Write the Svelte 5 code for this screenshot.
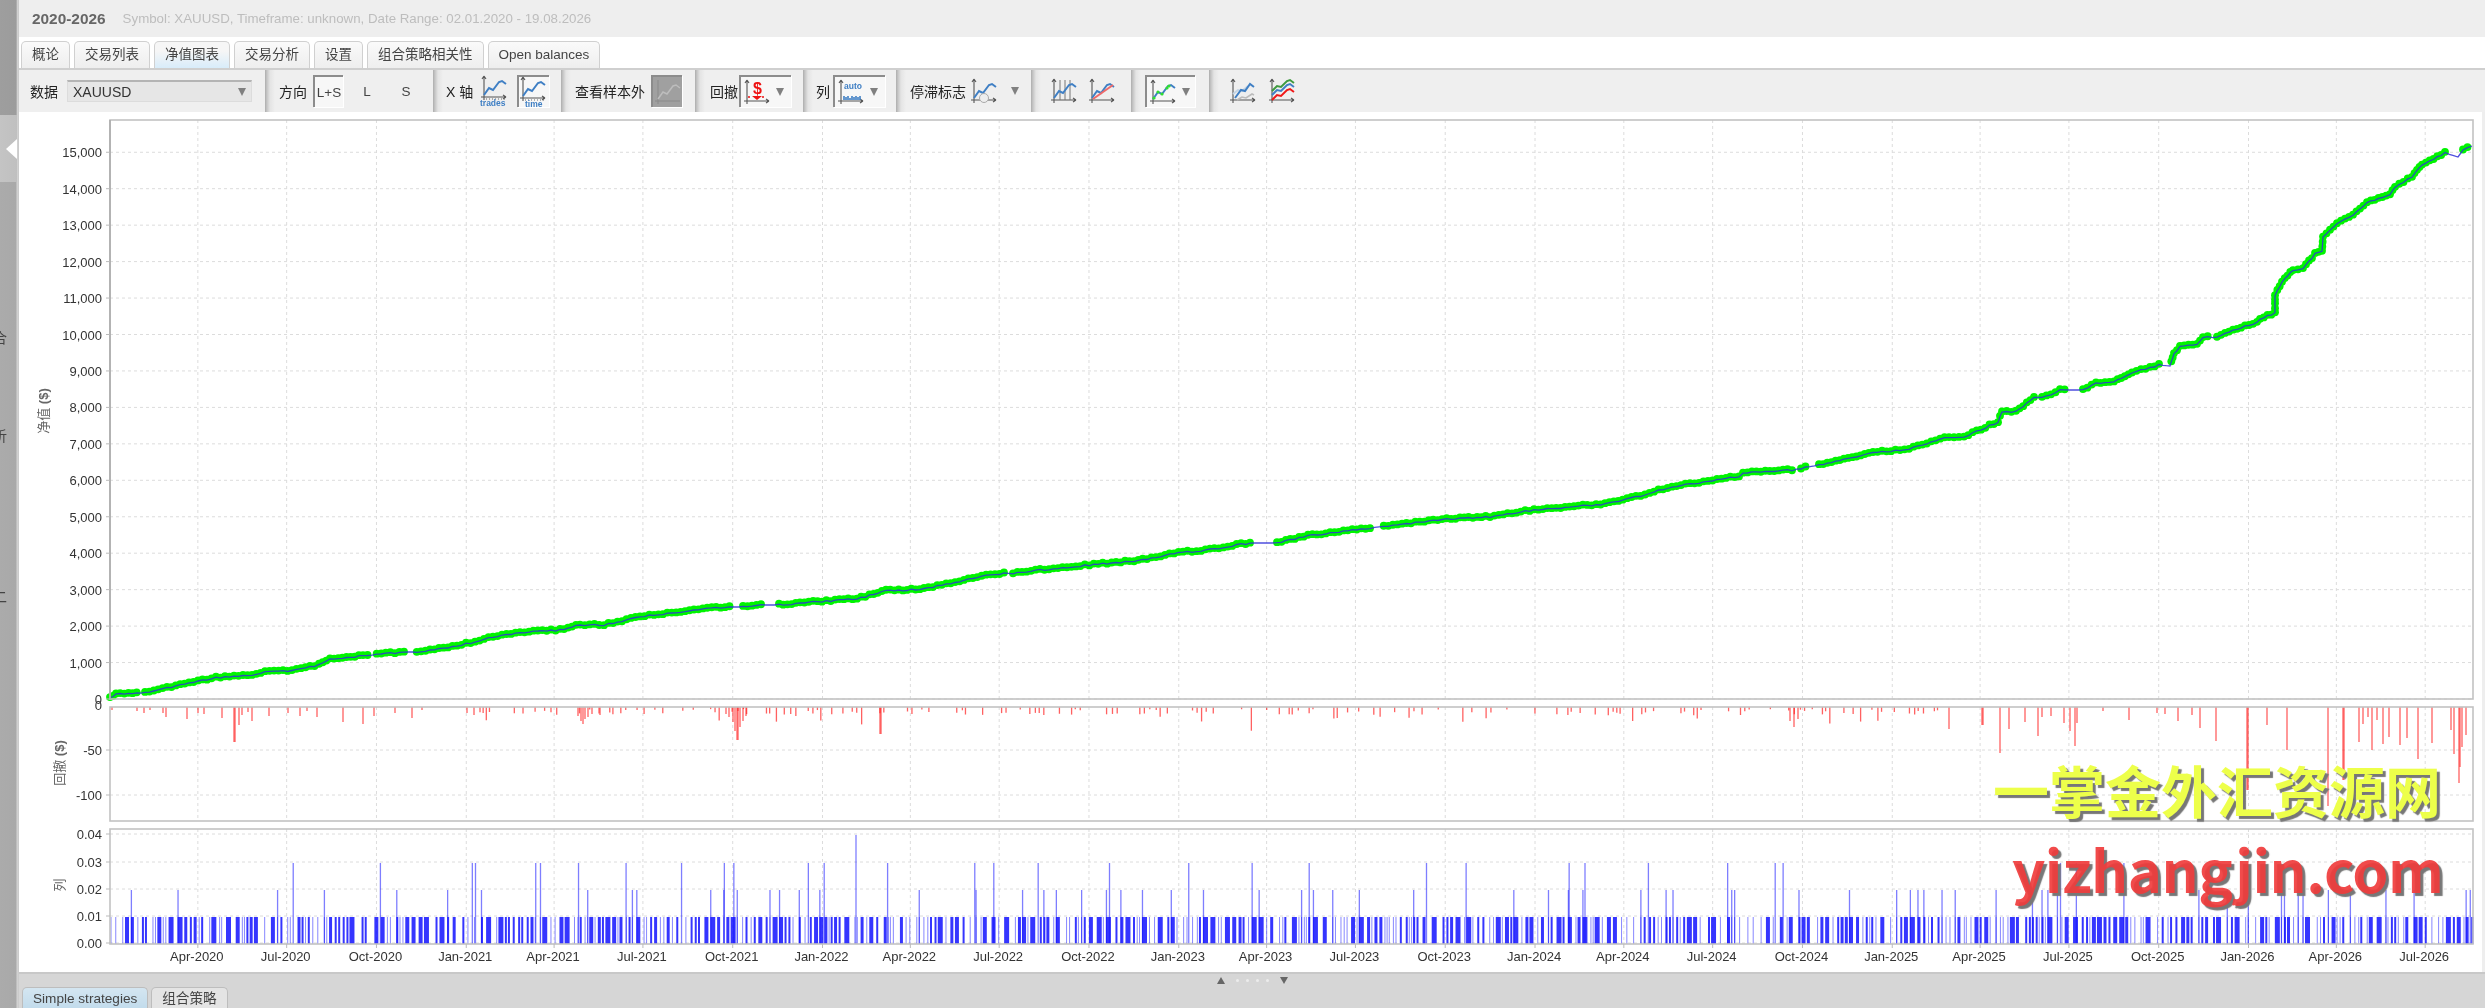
<script>
  const tabs = ['概论', '交易列表', '净值图表', '交易分析', '设置', '组合策略相关性', 'Open balances'];

  function rng(seed) {
    let s = seed;
    return () => {
      s = (s * 1664525 + 1013904223) % 4294967296;
      return s / 4294967296;
    };
  }

  const L = 110, R = 2473, T = 120;
  const startDay = Date.UTC(2020, 0, 2);
  const perDay = (R - L) / 2421;
  const dx = (y, m) => L + ((Date.UTC(y, m, 1) - startDay) / 86400000) * perDay;
  const mon = ['Jan', 'Apr', 'Jul', 'Oct'];
  const quarters = [];
  for (let y = 2020; y <= 2026; y++) {
    for (let q = 0; q < 4; q++) {
      if ((y === 2020 && q === 0) || (y === 2026 && q > 2)) continue;
      quarters.push({ x: dx(y, q * 3), label: `${mon[q]}-${y}` });
    }
  }

  const eqTicks = Array.from({ length: 16 }, (_, i) => ({
    y: 699 - i * 36.45,
    label: i === 0 ? '0' : `${i},000`
  }));
  const ddTicks = [{ y: 750, label: '-50' }, { y: 795, label: '-100' }];
  const lotTicks = [
    { y: 834, label: '0.04' }, { y: 862, label: '0.03' }, { y: 889, label: '0.02' },
    { y: 916, label: '0.01' }, { y: 943, label: '0.00' }
  ];

  const curve = [
    [110,698],[116,694],[145,693],[167,688],[189,683],[216,678],[252,675],[265,672],[292,671],[319,665],
    [330,659],[363,656],[404,652],[421,652],[466,644],[493,637],[529,632],[560,630],[580,625],[604,625],
    [640,617],[654,615],[725,607],[743,607],[761,605],[779,605],[800,603],[857,599],[886,591],[924,589],
    [995,574],[1013,573],[1058,568],[1134,561],[1147,559],[1183,552],[1201,551],[1250,543],[1277,543],[1308,536],
    [1370,528],[1402,524],[1460,518],[1490,517],[1534,510],[1605,504],[1636,497],[1672,487],[1726,478],[1739,477],
    [1743,473],[1792,470],[1819,465],[1873,453],[1909,449],[1949,437],[1964,437],[1998,422],[2002,412],[2016,412],
    [2034,397],[2042,398],[2060,390],[2083,390],[2096,383],[2114,382],[2132,373],[2159,365],[2170,366],[2174,353],
    [2180,347],[2197,345],[2203,337],[2217,338],[2233,330],[2257,323],[2260,319],[2275,313],[2275,295],[2282,282],
    [2293,270],[2303,269],[2315,254],[2322,252],[2323,237],[2337,223],[2353,215],[2367,203],[2390,195],[2395,187],
    [2412,177],[2422,165],[2445,153],[2458,157],[2463,150],[2472,146]
  ];
  const gaps = [[138,145],[368,375],[408,414],[732,741],[765,776],[1004,1013],[1254,1277],[1372,1382],[1792,1800],[1806,1819],[2034,2040],[2065,2083],[2161,2171],[2208,2215],[2445,2463]];

  const dotRand = rng(17);
  const dots = [];
  const wiggle = [];
  for (let i = 1; i < curve.length; i++) {
    const [x0, y0] = curve[i - 1];
    const [x1, y1] = curve[i];
    const n = Math.max(1, Math.round(Math.hypot(x1 - x0, y1 - y0) / 4.4));
    for (let k = 0; k < n; k++) {
      const x = x0 + ((x1 - x0) * k) / n;
      const y = y0 + ((y1 - y0) * k) / n;
      const inGap = gaps.some(([a, b]) => x > a && x < b);
      const jy = inGap ? y : y + (dotRand() - 0.5) * 1.6;
      wiggle.push(`${x.toFixed(1)},${jy.toFixed(1)}`);
      if (!inGap) dots.push({ x, y: jy - 0.5 });
    }
  }
  wiggle.push('2472,146');
  const linePts = wiggle.join(' ');

  const ddKnown = [
    [112,3],[137,4],[144,6],[150,3],[163,6],[166,10],[187,12],[198,6],[204,7],[222,11],[234,35],[235,35],[239,18],[242,8],[248,5],[252,14],
    [269,9],[288,6],[300,9],[307,4],[317,10],[343,15],[363,17],[374,9],[395,6],[412,11],[422,3],[467,6],[474,8],
    [578,9],[581,14],[583,17],[585,12],[588,10],[592,7],[600,8],[726,7],[729,10],[733,15],[735,24],[737,33],[738,33],[740,20],[743,14],[746,9],[880,27],[881,27],[1790,14],[1794,20],[1798,12],
    [1949,22],[1982,18],[1983,18],[2000,46],[2009,22],[2025,15],[2038,29],[2042,10],[2051,9],[2064,16],[2070,24],[2075,39],[2077,16],
    [2103,4],[2129,13],[2157,6],[2165,7],[2178,14],[2192,8],[2200,21],[2216,34],[2247,83],[2248,83],[2267,18],[2287,43],[2328,99],
    [2343,73],[2344,73],[2359,35],[2363,17],[2368,10],[2372,43],[2377,13],[2383,37],[2389,30],[2400,38],[2407,31],[2418,52],[2432,36],
    [2451,23],[2454,47],[2459,76],[2460,60],[2462,40],[2466,28]
  ];
  const ddRand = rng(91);
  const ddBars = ddKnown.map(([x, d]) => ({ x, d }));
  for (let x = 480; x < 1949; x += 3 + ddRand() * ddRand() * 30) {
    const r = ddRand();
    const d = r < 0.72 ? 2 + ddRand() * 6 : r < 0.95 ? 6 + ddRand() * 9 : 12 + ddRand() * 12;
    ddBars.push({ x, d });
  }

  const lotRand = rng(2024);
  const lotBars = [];
  const lotRuns = [];
  const widths = [1, 1, 1, 1, 2, 2, 3, 4, 5];
  let x = 110.5;
  while (x < 2472) {
    const w = widths[Math.floor(lotRand() * widths.length)];
    lotRuns.push({ x: x + w / 2, w: Math.min(w, 2472 - x), dark: w > 1 });
    if (lotRand() < 0.16) lotBars.push({ x: x + 0.5, h: 54 });
    x += w + 1 + lotRand() * lotRand() * 7;
  }
  [185,240,298,300,338,341,365,395,430,457,463,510,520,560,615,627,655,700,750,790,826,900,925,990,1000,1040,1090,1120,1125,1300,1310,1340]
    .forEach((v) => lotBars.push({ x: v * 1.585, h: 81 }));
  lotBars.push({ x: 856, h: 109 });
</script>

{#snippet axes()}
  <path d="M4 1v24M1 22h25M4 1l-2 3M4 1l2 3M26 22l-3-2M26 22l-3 2" fill="none" stroke="#555" stroke-width="1.1" />
{/snippet}
{#snippet blueLine()}
  <path d="M4 20l5-7 4 2 6-8 3-1 4 3" fill="none" stroke="#3f7fc4" stroke-width="2" />
{/snippet}

<div class="app">
  <aside class="side">
    <div class="side-top"></div>
    <div class="side-pointer"><span class="tri"></span></div>
    <span class="clip c1">合</span>
    <span class="clip c2">析</span>
    <span class="clip c3">二</span>
  </aside>

  <div class="main">
    <header class="title">
      <strong>2020-2026</strong>
      <span>Symbol: XAUUSD, Timeframe: unknown, Date Range: 02.01.2020 - 19.08.2026</span>
    </header>

    <nav class="tabs">
      {#each tabs as t, i}
        <div class="tab" class:active={i === 2}>{t}</div>
      {/each}
    </nav>

    <div class="toolbar">
      <div class="grp g1">
        <span class="lab">数据</span>
        <div class="combo"><span>XAUUSD</span><i class="arrow"></i></div>
      </div>
      <div class="grp g2">
        <span class="lab">方向</span>
        <div class="btn on ls">L+S</div>
        <div class="btn ls">L</div>
        <div class="btn ls">S</div>
      </div>
      <div class="grp g3">
        <span class="lab">X 轴</span>
        <div class="btn ic">
          <svg width="30" height="32" viewBox="0 0 30 32">
            {@render axes()}
            {@render blueLine()}
            <path d="M6 24h20" stroke="#666" stroke-dasharray="1 2" />
            <text x="0" y="31" class="mini">trades</text>
          </svg>
        </div>
        <div class="btn on ic">
          <svg width="30" height="32" viewBox="0 0 30 32">
            {@render axes()}
            {@render blueLine()}
            <path d="M6 24h20" stroke="#666" stroke-dasharray="1 2" />
            <text x="6" y="31" class="mini">time</text>
          </svg>
        </div>
      </div>
      <div class="grp g4">
        <span class="lab">查看样本外</span>
        <div class="btn on oos">
          <svg width="27" height="27" viewBox="0 0 27 27">
            <path d="M4 1v24M1 22h25" fill="none" stroke="#8a8a8a" />
            <path d="M4 20l5-7 4 2 6-8 3-1 4 3" fill="none" stroke="#bdbdbd" stroke-width="1.5" />
          </svg>
        </div>
      </div>
      <div class="grp g5">
        <span class="lab">回撤</span>
        <div class="btn on drop w52">
          <svg width="27" height="27" viewBox="0 0 27 27">
            {@render axes()}
            <text x="10" y="15" class="dollar">$</text>
            <path d="M5 18h20" stroke="#e11" stroke-dasharray="2 5" stroke-width="1.5" />
            <path d="M9 17h10l-5 4z" fill="#e11" />
          </svg>
          <i class="arrow"></i>
        </div>
      </div>
      <div class="grp g6">
        <span class="lab">列</span>
        <div class="btn on drop w52">
          <svg width="27" height="27" viewBox="0 0 27 27">
            {@render axes()}
            <text x="7" y="10" class="auto">auto</text>
            <path d="M7 21v-4M9 21v-3M11 21v-4M13 21v-2M15 21v-4M17 21v-3M19 21v-4M21 21v-3M23 21v-4" stroke="#3f7fc4" stroke-width="1.6" />
          </svg>
          <i class="arrow"></i>
        </div>
      </div>
      <div class="grp g7">
        <span class="lab">停滞标志</span>
        <div class="drop plain">
          <svg width="27" height="27" viewBox="0 0 27 27">
            {@render axes()}
            {@render blueLine()}
            <circle cx="14" cy="20" r="4.5" fill="#eee" stroke="#aaa" />
          </svg>
          <i class="arrow"></i>
        </div>
      </div>
      <div class="grp g8">
        <svg width="27" height="27" viewBox="0 0 27 27">
          {@render axes()}
          <path d="M10 2v20M15 2v20M20 2v20" stroke="#777" />
          {@render blueLine()}
        </svg>
        <svg width="27" height="27" viewBox="0 0 27 27">
          {@render axes()}
          {@render blueLine()}
          <path d="M5 21L25 7" stroke="#ee6a6a" stroke-width="2" />
        </svg>
      </div>
      <div class="grp g9">
        <div class="btn on drop w50">
          <svg width="27" height="27" viewBox="0 0 27 27">
            {@render axes()}
            {@render blueLine()}
            <g fill="#2fe02f"><circle cx="5" cy="19" r="1.6" /><circle cx="9" cy="13" r="1.6" /><circle cx="13" cy="15" r="1.6" /><circle cx="18" cy="9" r="1.6" /><circle cx="20" cy="7" r="1.6" /></g>
          </svg>
          <i class="arrow"></i>
        </div>
      </div>
      <div class="grp g10">
        <svg width="27" height="27" viewBox="0 0 27 27">
          {@render axes()}
          <path d="M4 16l5-4 4 1 6-5" fill="none" stroke="#c3d4e4" stroke-width="2" />
          <path d="M6 20l6-8 4 1 5-7 4 3" fill="none" stroke="#3f7fc4" stroke-width="2" />
          <path d="M8 22l5-3 4 1 6-4 2 1" fill="none" stroke="#bbb" stroke-width="1.6" />
        </svg>
        <svg width="27" height="27" viewBox="0 0 27 27">
          {@render axes()}
          <path d="M4 13l5-5 4 1 6-6 3-1 4 3" fill="none" stroke="#3f9a3f" stroke-width="2" />
          <path d="M4 17l5-5 4 1 6-6 3-1 4 3" fill="none" stroke="#3f7fc4" stroke-width="2" />
          <path d="M4 22l5-5 4 1 6-6 3-1 4 3" fill="none" stroke="#f01818" stroke-width="2" />
        </svg>
      </div>
    </div>

    <section class="chart">
      <svg class="plot" width="2466" height="860" viewBox="19 112 2466 860">
        <!-- grid -->
        <g stroke="#dcdcdc" stroke-dasharray="3 3" fill="none">
          {#each eqTicks as t}<line x1={L} x2={R} y1={t.y} y2={t.y} />{/each}
          {#each ddTicks as t}<line x1={L} x2={R} y1={t.y} y2={t.y} />{/each}
          {#each lotTicks as t}<line x1={L} x2={R} y1={t.y} y2={t.y} />{/each}
          {#each quarters as q}
            <line x1={q.x} x2={q.x} y1={T} y2={699} />
            <line x1={q.x} x2={q.x} y1={707} y2={821} />
            <line x1={q.x} x2={q.x} y1={829} y2={944} />
          {/each}
        </g>

        <!-- equity -->
        <g fill="#00f400">
          {#each dots as d}<circle cx={d.x} cy={d.y} r="3.9" />{/each}
        </g>
        <polyline points={linePts} fill="none" stroke="#3030d8" stroke-opacity="0.85" stroke-width="1.3" />

        <!-- drawdown -->
        <g stroke="#ff1e1e" stroke-opacity="0.7" stroke-width="1.3">
          {#each ddBars as b}<line x1={b.x} x2={b.x} y1={707} y2={707 + b.d} />{/each}
        </g>

        <!-- lots -->
        <g stroke="#1414ff" stroke-opacity="0.55" stroke-width="1.3">
          {#each lotBars as b}<line x1={b.x} x2={b.x} y1={944} y2={944 - b.h} />{/each}
        </g>
        {#each lotRuns as b}
          <line x1={b.x} x2={b.x} y1={944} y2={917} stroke="#1212ff" stroke-width={b.w} stroke-opacity={b.dark ? 0.85 : 0.5} />
        {/each}

        <!-- frames -->
        <g fill="none" stroke="#c2c2c2" stroke-width="1.6">
          <rect x={L} y={T} width={R - L} height={699 - T} />
          <rect x={L} y={707} width={R - L} height={114} />
          <rect x={L} y={829} width={R - L} height={115} />
        </g>
        <line x1={L} x2={L} y1={T} y2={699} stroke="#a8a8a8" stroke-width="1.4" />

        <!-- ticks and labels -->
        <g stroke="#bbb">
          {#each [...eqTicks, ...ddTicks, ...lotTicks] as t}<line x1={L - 4} x2={L} y1={t.y} y2={t.y} />{/each}
          {#each quarters as q}<line x1={q.x} x2={q.x} y1={944} y2={948} />{/each}
        </g>
        <g class="ylab">
          {#each eqTicks as t}<text x="102" y={t.y + 5}>{t.label}</text>{/each}
          <text x="102" y="710">0</text>
          {#each ddTicks as t}<text x="102" y={t.y + 5}>{t.label}</text>{/each}
          {#each lotTicks as t}<text x="102" y={t.y + 5}>{t.label}</text>{/each}
        </g>
        <g class="xlab">
          {#each quarters as q}<text x={q.x - 1} y="961">{q.label}</text>{/each}
        </g>
        <g class="axt">
          <text transform="translate(48 411) rotate(-90)">净值 <tspan font-weight="700">($)</tspan></text>
          <text transform="translate(64 763) rotate(-90)">回撤 <tspan font-weight="700">($)</tspan></text>
          <text transform="translate(64 885) rotate(-90)">列</text>
        </g>
      </svg>

      <div class="mark yellow">一掌金外汇资源网</div>
      <div class="mark red">yizhangjin.com</div>
    </section>

    <footer class="foot">
      <div class="splitter">
        <i class="up"></i><b></b><b></b><b></b><b></b><i class="down"></i>
      </div>
      <div class="btabs">
        <div class="btab active">Simple strategies</div>
        <div class="btab">组合策略</div>
      </div>
    </footer>
  </div>
</div>

<style>
  :global(body) {
    margin: 0;
    overflow: hidden;
    background: #ddd;
  }
  .app {
    width: 2485px;
    height: 1008px;
    display: flex;
    overflow: hidden;
    background: #fff;
    color: #333;
    font-family: "Liberation Sans", "Noto Sans CJK SC", sans-serif;
    filter: blur(0.5px);
  }
  .side {
    width: 19px;
    flex: none;
    position: relative;
    overflow: hidden;
    background: linear-gradient(90deg, #ababab 0, #a9a9a9 16px, #d4d4d4 17px, #c8c8c8 19px);
  }
  .side-top { height: 115px; background: linear-gradient(90deg, #9e9e9e 0, #9c9c9c 16px, transparent 17px); }
  .side-pointer {
    height: 67px;
    display: flex;
    align-items: center;
    justify-content: flex-end;
    padding-right: 2px;
    background: linear-gradient(90deg, #c4c4c4 0, #c0c0c0 16px, transparent 17px);
  }
  .tri {
    width: 0;
    height: 0;
    border-style: solid;
    border-width: 10px 11px 10px 0;
    border-color: transparent #fff transparent transparent;
  }
  .clip { position: absolute; left: -7px; font-size: 14px; color: #444; }
  .c1 { top: 327px; }
  .c2 { top: 425px; }
  .c3 { top: 586px; }

  .main {
    flex: 1;
    min-width: 0;
    display: flex;
    flex-direction: column;
  }
  .title {
    height: 37px;
    flex: none;
    background: #eee;
    display: flex;
    align-items: center;
    gap: 17px;
    padding-left: 13px;
  }
  .title strong { font-size: 15.4px; color: #666; }
  .title span { font-size: 13.3px; color: #bdbdbd; }

  .tabs {
    height: 31px;
    flex: none;
    box-sizing: border-box;
    padding: 4px 0 0 2px;
    display: flex;
    gap: 4px;
    background: #fff;
  }
  .tab {
    padding: 0 10px;
    font-size: 13.5px;
    line-height: 26px;
    color: #444;
    border: 1px solid #d0d0d0;
    border-bottom: 0;
    border-radius: 5px 5px 0 0;
    background: linear-gradient(#fafafa, #eeeeee);
    box-sizing: border-box;
  }
  .tab.active { background: linear-gradient(#f6f6f6 35%, #d8ecfa); }

  .toolbar {
    height: 44px;
    flex: none;
    display: grid;
    grid-template-columns: 246px 168px 128px 134px 108px 93px 135px 100px 78px 1fr;
    background: #efefef;
    border-top: 2px solid #cfcfcf;
    box-sizing: border-box;
    font-size: 14px;
  }
  .grp {
    display: flex;
    align-items: center;
    box-sizing: border-box;
    background: linear-gradient(90deg, #adadad 0, #c6c6c6 2px, #e4e4e4 5px, #efefef 10px);
  }
  .g1 { background: none; padding-left: 11px; gap: 9px; }
  .g2 { padding-left: 14px; gap: 6px; }
  .g3 { padding-left: 13px; gap: 6px; }
  .g4 { padding-left: 14px; gap: 6px; }
  .g5 { padding-left: 15px; gap: 1px; }
  .g6 { padding-left: 13px; gap: 3px; }
  .g7 { padding-left: 14px; gap: 4px; }
  .g8 { padding-left: 19px; gap: 11px; }
  .g9 { padding-left: 14px; }
  .g10 { padding-left: 20px; gap: 12px; }
  .lab { color: #222; white-space: nowrap; }
  .combo {
    width: 185px;
    height: 22px;
    display: flex;
    align-items: center;
    justify-content: space-between;
    padding: 0 5px;
    box-sizing: border-box;
    background: #e6e6e6;
    border: 1px solid #dcdcdc;
    border-top: 2px solid #b4b4b4;
    color: #333;
    font-size: 14px;
  }
  .arrow {
    width: 0;
    height: 0;
    border-style: solid;
    border-width: 8px 4.5px 0;
    border-color: #808080 transparent transparent;
  }
  .btn {
    display: flex;
    align-items: center;
    justify-content: center;
    box-sizing: border-box;
    height: 32px;
  }
  .btn.on {
    background: #f7f7f7;
    border-top: 2px solid #8c8c8c;
    border-left: 2px solid #8c8c8c;
    box-shadow: 1px 1px 0 #fff;
  }
  .ls { width: 30px; font-size: 13.5px; color: #444; margin-right: 3px; }
  .ic { width: 32px; }
  .oos.on { width: 31px; background: #a0a0a0; }
  .drop { display: flex; align-items: center; gap: 6px; padding-left: 2px; justify-content: flex-start; }
  .w52 { width: 52px; }
  .w50 { width: 50px; }
  .plain { gap: 14px; padding-left: 0; }
  .mini { font: 700 8.5px "Liberation Sans", sans-serif; fill: #3f7fc4; }
  .dollar { font: 700 16px "Liberation Sans", sans-serif; fill: #e11; }
  .auto { font: 700 8.5px "Liberation Sans", sans-serif; fill: #3f7fc4; }

  .chart {
    position: relative;
    height: 860px;
    flex: none;
    background: linear-gradient(90deg, #fff 2463px, #eee 2463px);
  }
  .plot { display: block; }
  .ylab text { font-size: 13px; text-anchor: end; fill: #333; }
  .xlab text { font-size: 13px; text-anchor: middle; fill: #333; }
  .axt text { font-size: 13px; text-anchor: middle; fill: #666; }
  .mark {
    position: absolute;
    white-space: nowrap;
    font-family: "Noto Sans CJK SC", "Noto Sans", sans-serif;
    font-weight: 700;
    line-height: 1;
    text-shadow: 3px 3px 1px #777;
  }
  .yellow { left: 1974px; top: 649px; font-size: 56px; color: #edff4a; }
  .red { left: 1993px; top: 727px; font-size: 58px; color: rgba(240, 60, 60, 0.92); letter-spacing: -0.5px; }

  .foot {
    flex: 1;
    position: relative;
    display: flex;
    flex-direction: column;
    background: #d6d6d6;
    border-top: 2px solid #c8c8c8;
    box-sizing: border-box;
  }
  .splitter {
    height: 13px;
    display: flex;
    align-items: center;
    justify-content: center;
    gap: 7px;
    flex: none;
  }
  .splitter b { width: 3px; height: 3px; border-radius: 50%; background: #ececec; }
  .up, .down { width: 0; height: 0; border-style: solid; margin: 0 4px; }
  .up { border-width: 0 4px 7px; border-color: transparent transparent #666; }
  .down { border-width: 7px 4px 0; border-color: #666 transparent transparent; }
  .btabs { display: flex; gap: 3px; padding-left: 3px; margin-top: auto; }
  .btab {
    height: 21px;
    padding: 0 10px;
    font-size: 13.6px;
    line-height: 21px;
    color: #444;
    box-sizing: border-box;
    border: 1px solid #bdbdbd;
    border-bottom: 0;
    border-radius: 5px 5px 0 0;
    background: #e4e4e4;
  }
  .btab.active { background: linear-gradient(#d4e6f1, #c2dcec); }
</style>
